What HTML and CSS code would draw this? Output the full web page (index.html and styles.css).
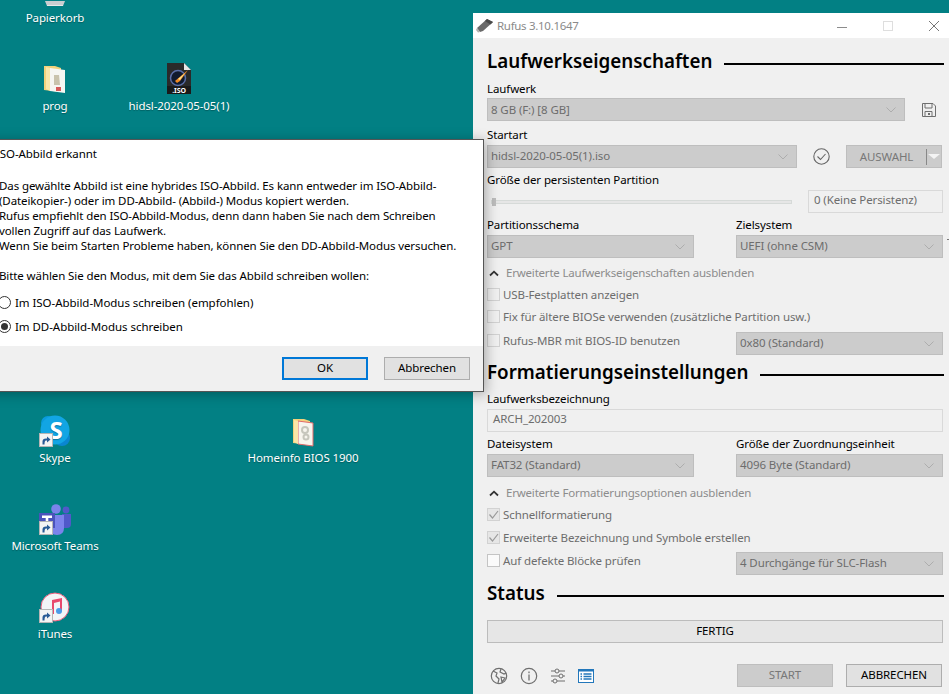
FILE: index.html
```html
<!DOCTYPE html>
<html lang="de">
<head>
  <meta charset="UTF-8">
  <title>Rufus 3.10.1647</title>
  <link rel="stylesheet" href="styles.css">
</head>
<body>
  <svg class="defs" width="0" height="0">
    <symbol id="shortcut" viewBox="0 0 14 14">
      <rect x="0.5" y="0.5" width="13" height="13" fill="#f4f4f4" stroke="#b5b5b5"/>
      <path d="M3.5 11.5V8.5Q3.5 5.5 7 5.5H8V3.5L11.5 6.5 8 9.5V7.5H7Q5.5 7.5 5.5 11.5Z" fill="#2a5b96"/>
    </symbol>
    <symbol id="chev" viewBox="0 0 10 6">
      <path d="M0.5 0.5L5 5 9.5 0.5" fill="none" stroke="#adadad"/>
    </symbol>
    <symbol id="tick" viewBox="0 0 13 13">
      <path d="M2.5 6.5L5.5 10 11 3" fill="none" stroke="#9a9a9a" stroke-width="1.2"/>
    </symbol>
    <symbol id="up" viewBox="0 0 10 7">
      <path d="M1 5.5L5 1.7 9 5.5" fill="none" stroke="#333" stroke-width="1.8"/>
    </symbol>
  </svg>

  <div class="desktop">
    <div class="icon icon-bin">
      <svg class="art" width="34" height="34" viewBox="0 0 34 34">
        <path d="M7 29H27L25 34H9Z" fill="#c9cdd0"/>
        <path d="M9 33H25V34H9Z" fill="#e8e8e8"/>
      </svg>
      <span>Papierkorb</span>
    </div>
    <div class="icon icon-prog">
      <svg class="art" width="34" height="34" viewBox="0 0 34 34">
        <path d="M6 6H17L23 8V32L6 30Z" fill="#f3d27c"/>
        <path d="M12 8L27 10V33L12 31Z" fill="#f6f6f2"/>
        <path d="M12 8L8 7V29L12 31Z" fill="#fbe6a8"/>
        <path d="M16 15H21L22 25H16Z" fill="#c9c3ad"/>
        <rect x="18" y="27" width="5" height="4" fill="#d65a5a"/>
      </svg>
      <span>prog</span>
    </div>
    <div class="icon icon-iso">
      <svg class="art" width="34" height="34" viewBox="0 0 34 34">
        <path d="M5 3H22L29 10V34H5Z" fill="#2a2a2a"/>
        <path d="M22 3L29 10H22Z" fill="#e6e6e6"/>
        <rect x="5" y="26" width="24" height="8" fill="#1a1a1a"/>
        <circle cx="16" cy="18" r="7.5" fill="#101a2e" stroke="#5a6ea8" stroke-width="1.5"/>
        <path d="M13 21L26 10 18 21 15 23Z" fill="#f08a24"/>
        <path d="M16 19L23 13 18 20Z" fill="#ffe08a"/>
        <text class="iso-mark" x="17" y="32.5" text-anchor="middle">.ISO</text>
      </svg>
      <span>hidsl-2020-05-05(1)</span>
    </div>
    <div class="icon icon-skype">
      <svg class="art" width="34" height="34" viewBox="0 0 34 34">
        <circle cx="10" cy="11" r="7" fill="#0a9bdc"/>
        <circle cx="24" cy="26" r="8" fill="#0a86d0"/>
        <circle cx="17" cy="18" r="14.5" fill="#12a5e4"/>
        <text class="skype-mark" x="18" y="27" text-anchor="middle">S</text>
        <use href="#shortcut" x="1" y="21" width="14" height="14"/>
      </svg>
      <span>Skype</span>
    </div>
    <div class="icon icon-home">
      <svg class="art" width="34" height="34" viewBox="0 0 34 34">
        <path d="M7 7H18L24 9V33L7 31Z" fill="#f3d27c"/>
        <path d="M12 9L27 11V34L12 32Z" fill="#f7f5ee" stroke="#e0696a"/>
        <path d="M12 9L8 8V30L12 32Z" fill="#fbe6a8"/>
        <circle cx="19" cy="18" r="3" fill="none" stroke="#c6c6bc" stroke-width="2"/>
        <circle cx="20" cy="25" r="2.5" fill="none" stroke="#c6c6bc" stroke-width="2"/>
      </svg>
      <span>Homeinfo BIOS 1900</span>
    </div>
    <div class="icon icon-teams">
      <svg class="art" width="34" height="34" viewBox="0 0 34 34">
        <circle cx="18" cy="9" r="4.8" fill="#7b83eb"/>
        <circle cx="28" cy="10" r="3.4" fill="#5059c9"/>
        <path d="M24 14H33V24Q33 28 29 28H24Z" fill="#5059c9"/>
        <path d="M12 15H26V28Q26 35 19 35 12 35 12 28Z" fill="#7b83eb"/>
        <rect x="1" y="13" width="16" height="15" fill="#4b53bc"/>
        <path d="M4 15.5H14V18H10.3V26H7.7V18H4Z" fill="#fff"/>
        <use href="#shortcut" x="1" y="21" width="14" height="14"/>
      </svg>
      <span>Microsoft Teams</span>
    </div>
    <div class="icon icon-itunes">
      <svg class="art" width="34" height="34" viewBox="0 0 34 34">
        <circle cx="17" cy="19" r="14" fill="#f3f4f7" stroke="#ee5b7b" stroke-width="1"/>
        <path d="M14 12L24 10V23H22V13.5L16 15V26H14Z" fill="#e8486d"/>
        <circle cx="21" cy="23" r="3" fill="#4b9be8"/>
        <use href="#shortcut" x="1" y="21" width="14" height="14"/>
      </svg>
      <span>iTunes</span>
    </div>

    <div class="rufus">
      <div class="titlebar">
        <svg class="usb" width="18" height="15" viewBox="0 0 18 15">
          <path d="M1 10L11 1 17 4 7 13 4 14Z" fill="#6a6a6a"/>
          <path d="M11 1L17 4 14.5 6.5 9 3Z" fill="#4a4a4a"/>
          <path d="M1 10L4 14 2 14.5 0 12Z" fill="#b0b0b0"/>
        </svg>
        <span class="title">Rufus 3.10.1647</span>
        <div class="winbtns">
          <svg width="10" height="10" viewBox="0 0 10 10"><path d="M0 6.5H10" stroke="#8c8c8c"/></svg>
          <svg width="10" height="10" viewBox="0 0 10 10"><rect x="0.5" y="0.5" width="9" height="9" fill="none" stroke="#dedede"/></svg>
          <svg width="10" height="10" viewBox="0 0 10 10"><path d="M0 0L10 10M10 0L0 10" stroke="#777"/></svg>
        </div>
      </div>

      <div class="panel">
        <h2 class="section first">Laufwerkseigenschaften</h2>
        <div class="label">Laufwerk</div>
        <div class="line">
          <div class="select grow">8 GB (F:) [8 GB]<svg class="chev"><use href="#chev"/></svg></div>
          <svg class="save" width="14" height="14" viewBox="0 0 14 14">
            <path d="M0.5 0.5H11L13.5 3V13.5H0.5Z" fill="none" stroke="#6f6f6f"/>
            <path d="M3 0.5V5H10V0.5M3 13.5V8.5H10V13.5" fill="none" stroke="#6f6f6f"/>
            <rect x="6" y="10" width="2" height="2" fill="#6f6f6f"/>
          </svg>
        </div>
        <div class="label gap5">Startart</div>
        <div class="line">
          <div class="select boot">hidsl-2020-05-05(1).iso<svg class="chev"><use href="#chev"/></svg></div>
          <svg class="verify" width="17" height="17" viewBox="0 0 17 17">
            <circle cx="8.5" cy="8.5" r="7.7" fill="none" stroke="#666" stroke-width="1.1"/>
            <path d="M4.5 8.5L7.5 11.5 12.5 6" fill="none" stroke="#666" stroke-width="1.1"/>
          </svg>
          <div class="split">
            <span class="split-text">AUSWAHL</span>
            <span class="split-arrow"></span>
          </div>
        </div>
        <div class="label gap4">Größe der persistenten Partition</div>
        <div class="line">
          <div class="slider"><span class="thumb"></span></div>
          <div class="field persist">0 (Keine Persistenz)</div>
        </div>
        <div class="cols gap4">
          <div>
            <div class="label">Partitionsschema</div>
            <div class="select">GPT<svg class="chev"><use href="#chev"/></svg></div>
          </div>
          <div>
            <div class="label">Zielsystem</div>
            <div class="select">UEFI (ohne CSM)<svg class="chev"><use href="#chev"/></svg></div>
          </div>
        </div>
        <div class="expander gap5"><svg width="10" height="7"><use href="#up"/></svg>Erweiterte Laufwerkseigenschaften ausblenden</div>
        <div class="check"><span class="box"></span>USB-Festplatten anzeigen</div>
        <div class="check"><span class="box"></span>Fix für ältere BIOSe verwenden (zusätzliche Partition usw.)</div>
        <div class="cols gap3">
          <div class="check tight"><span class="box"></span>Rufus-MBR mit BIOS-ID benutzen</div>
          <div class="select">0x80 (Standard)<svg class="chev"><use href="#chev"/></svg></div>
        </div>

        <h2 class="section gap6">Formatierungseinstellungen</h2>
        <div class="label gap6 high">Laufwerksbezeichnung</div>
        <div class="field">ARCH_202003</div>
        <div class="cols gap4">
          <div>
            <div class="label">Dateisystem</div>
            <div class="select">FAT32 (Standard)<svg class="chev"><use href="#chev"/></svg></div>
          </div>
          <div>
            <div class="label">Größe der Zuordnungseinheit</div>
            <div class="select">4096 Byte (Standard)<svg class="chev"><use href="#chev"/></svg></div>
          </div>
        </div>
        <div class="expander gap6"><svg width="10" height="7"><use href="#up"/></svg>Erweiterte Formatierungsoptionen ausblenden</div>
        <div class="check"><span class="box ticked"><svg width="13" height="13"><use href="#tick"/></svg></span>Schnellformatierung</div>
        <div class="check gap1"><span class="box ticked"><svg width="13" height="13"><use href="#tick"/></svg></span>Erweiterte Bezeichnung und Symbole erstellen</div>
        <div class="cols gap2">
          <div class="check tight"><span class="box open"></span>Auf defekte Blöcke prüfen</div>
          <div class="select">4 Durchgänge für SLC-Flash<svg class="chev"><use href="#chev"/></svg></div>
        </div>

        <h2 class="section gap7">Status</h2>
        <div class="progress">FERTIG</div>

        <div class="toolbar">
          <svg width="18" height="18" viewBox="0 0 18 18">
            <circle cx="9" cy="9" r="7.7" fill="none" stroke="#6f6f6f" stroke-width="1.2"/>
            <path d="M3 4L7 6 6 9 9 12 8 16M11 2L10 5 14 7 16 6M11 10L15 11 12 15Z" fill="none" stroke="#6f6f6f" stroke-width="1.2"/>
          </svg>
          <svg width="18" height="18" viewBox="0 0 18 18">
            <circle cx="9" cy="9" r="7.7" fill="none" stroke="#6f6f6f" stroke-width="1.2"/>
            <rect x="8.2" y="7.5" width="1.6" height="6" fill="#8a8a8a"/>
            <rect x="8.2" y="4.5" width="1.6" height="1.7" fill="#8a8a8a"/>
          </svg>
          <svg width="16" height="16" viewBox="0 0 16 16">
            <path d="M1 3H15M1 8H15M1 13H15" stroke="#6f6f6f"/>
            <circle cx="7" cy="3" r="2" fill="#f0f0f0" stroke="#6f6f6f"/>
            <circle cx="11" cy="8" r="2" fill="#f0f0f0" stroke="#6f6f6f"/>
            <circle cx="5" cy="13" r="2" fill="#f0f0f0" stroke="#6f6f6f"/>
          </svg>
          <svg width="16" height="14" viewBox="0 0 16 14">
            <rect x="0.5" y="0.5" width="15" height="13" fill="#fff" stroke="#2277bb"/>
            <rect x="0" y="0" width="16" height="2.5" fill="#2277bb"/>
            <path d="M2.5 5H4M2.5 7.5H4M2.5 10H4M5.5 5H13.5M5.5 7.5H13.5M5.5 10H13.5" stroke="#2277bb" stroke-width="1.4"/>
          </svg>
          <div class="actions">
            <div class="btn off">START</div>
            <div class="btn">ABBRECHEN</div>
          </div>
        </div>
      </div>
    </div>

    <div class="dialog">
      <div class="dialog-body">
        <div class="dialog-title">ISO-Abbild erkannt</div>
        <p>Das gewählte Abbild ist eine hybrides ISO-Abbild. Es kann entweder im ISO-Abbild-<br>
        (Dateikopier-) oder im DD-Abbild- (Abbild-) Modus kopiert werden.<br>
        Rufus empfiehlt den ISO-Abbild-Modus, denn dann haben Sie nach dem Schreiben<br>
        vollen Zugriff auf das Laufwerk.<br>
        Wenn Sie beim Starten Probleme haben, können Sie den DD-Abbild-Modus versuchen.</p>
        <p>Bitte wählen Sie den Modus, mit dem Sie das Abbild schreiben wollen:</p>
        <div class="radio"><span class="dot"></span>Im ISO-Abbild-Modus schreiben (empfohlen)</div>
        <div class="radio"><span class="dot on"></span>Im DD-Abbild-Modus schreiben</div>
      </div>
      <div class="dialog-foot">
        <div class="dbtn primary">OK</div>
        <div class="dbtn">Abbrechen</div>
      </div>
    </div>
  </div>
</body>
</html>
```

FILE: styles.css
```css
* {
  box-sizing: border-box;
}
html, body {
  margin: 0;
  padding: 0;
}
body {
  font-family: "Noto Sans", "Open Sans", sans-serif;
  font-size: 11.5px;
  letter-spacing: -0.1px;
}
.defs {
  position: absolute;
}
.desktop {
  position: relative;
  width: 949px;
  height: 694px;
  overflow: hidden;
  background: #028084;
}

/* desktop icons */
.icon {
  position: absolute;
  width: 140px;
  display: flex;
  flex-direction: column;
  align-items: center;
  color: #fff;
  line-height: 18px;
  text-shadow: 0 1px 1px rgba(0,0,0,0.3);
}
.art {
  overflow: visible;
  margin-bottom: 3px;
}
.icon-bin { left: -15px; top: -28px; }
.icon-prog { left: -15px; top: 60px; }
.icon-iso { left: 109px; top: 60px; }
.icon-skype { left: -15px; top: 412px; }
.icon-home { left: 233px; top: 412px; }
.icon-teams { left: -15px; top: 500px; }
.icon-itunes { left: -15px; top: 588px; }
.iso-mark {
  font-size: 7px;
  font-weight: bold;
  fill: #fff;
}
.skype-mark {
  font-size: 24px;
  font-weight: bold;
  fill: #fff;
}

/* rufus window */
.rufus {
  position: absolute;
  left: 473px;
  top: 13px;
  width: 476px;
  height: 681px;
  background: #f0f0f0;
}
/* stray tick at the clipped right edge */
.rufus::after {
  content: "";
  position: absolute;
  right: 0;
  top: 226px;
  width: 2px;
  height: 1px;
  background: #777;
}
.titlebar {
  height: 25px;
  background: #fff;
  display: flex;
  align-items: center;
  padding-left: 3px;
  color: #8a8a8a;
}
.usb {
  margin-right: 3px;
}
.title {
  letter-spacing: -0.3px;
}
.winbtns {
  margin-left: auto;
  margin-right: 10px;
  display: flex;
  gap: 36px;
}
.panel {
  padding: 0 6px 0 14px;
  color: #000;
}
.section {
  display: flex;
  align-items: center;
  margin: 0 -1px 0 0;
  height: 24px;
  padding-bottom: 2px;
  font-size: 18.8px;
  font-weight: 600;
  letter-spacing: 0;
  white-space: nowrap;
}
.section::after {
  content: "";
  flex: 1;
  height: 2px;
  margin: 5px 0 0 12px;
  background: #000;
}
.section.first { margin-top: 12px; }
.section.gap6 { margin-top: 6px; }
.section.gap7 { margin-top: 7px; }
.label {
  height: 18px;
  line-height: 17px;
  margin-top: 6px;
}
.label.gap5 { margin-top: 5px; }
.label.gap4 { margin-top: 4px; line-height: 15px; }
.label.high { line-height: 15px; }
.cols .label { margin-top: 0; line-height: 15px; }
.line {
  display: flex;
  align-items: center;
}
.select {
  position: relative;
  height: 23px;
  line-height: 20px;
  padding-left: 3px;
  background: #ccc;
  border: 1px solid #bebebe;
  color: #6d6d6d;
}
.chev {
  position: absolute;
  right: 8px;
  top: 8px;
  width: 10px;
  height: 6px;
}
.grow { width: 418px; line-height: 21px; }
.save { margin-left: 17px; }
.boot { width: 310px; line-height: 19px; }
.verify { margin-left: 16px; }
.split {
  display: flex;
  align-items: center;
  width: 96px;
  height: 23px;
  margin: 1px 1px 0 auto;
  background: #ccc;
  border: 1px solid #bebebe;
  color: #787878;
}
.split-text {
  flex: 1;
  text-align: center;
  border-right: 1px solid #888;
  line-height: 16px;
}
.split-arrow {
  width: 12px;
  height: 0;
  border-top: 5px solid #f4f4f4;
  border-left: 6px solid transparent;
  border-right: 6px solid transparent;
  margin: 0 1px;
}
.slider {
  position: relative;
  width: 301px;
  height: 4px;
  margin-left: 4px;
  background: #e6e6e6;
  border: 1px solid #d6dad8;
}
.thumb {
  position: absolute;
  left: 0;
  top: -3px;
  width: 4px;
  height: 8px;
  background: #bdbdbd;
}
.field {
  height: 23px;
  line-height: 18px;
  padding-left: 5px;
  background: #f0f0f0;
  border: 1px solid #d9d9d9;
  color: #6d6d6d;
}
.persist {
  width: 135px;
  margin-left: 16px;
}
.cols {
  display: grid;
  grid-template-columns: 207px 207px;
  column-gap: 42px;
}
.check.gap1 { margin-top: 1px; }
.cols.gap2 { margin-top: 2px; }
.cols.gap3 { margin-top: 3px; }
.cols.gap4 { margin-top: 4px; }
.expander.gap5 { margin-top: 5px; }
.expander.gap6 { margin-top: 6px; }
.expander {
  display: flex;
  align-items: center;
  gap: 7px;
  height: 22px;
  padding: 0 0 2px 2px;
  line-height: 20px;
  color: #8c8c8c;
  letter-spacing: -0.2px;
}
.check {
  display: flex;
  align-items: center;
  height: 22px;
  padding-bottom: 3px;
  color: #6d6d6d;
  white-space: nowrap;
}
.check.tight {
  height: 20px;
}
.box {
  flex: none;
  width: 13px;
  height: 13px;
  margin-right: 3px;
  border: 1px solid #d2d2d2;
  background: #f0f0f0;
}
.box svg {
  display: block;
  margin: -1px;
}
.ticked { background: #e6e6e6; }
.open { background: #fafafa; border-color: #c4c4c4; }
.progress {
  height: 23px;
  margin-top: 14px;
  line-height: 19px;
  text-align: center;
  background: #e6e6e6;
  border: 1px solid #bcbcbc;
}
.toolbar {
  display: flex;
  align-items: center;
  gap: 12px;
  margin-top: 21px;
  padding-left: 3px;
}
.actions {
  display: flex;
  gap: 13px;
  margin-left: auto;
  margin-right: 1px;
}
.btn {
  width: 96px;
  height: 23px;
  line-height: 20px;
  text-align: center;
  background: #e1e1e1;
  border: 1px solid #adadad;
}
.btn.off {
  background: #ccc;
  border-color: #bebebe;
  color: #787878;
}

/* message box */
.dialog {
  position: absolute;
  left: -20px;
  top: 139px;
  width: 504px;
  height: 253px;
  display: flex;
  flex-direction: column;
  background: #fff;
  border: 1px solid #555;
  border-left: 0;
  box-shadow: 2px 2px 12px rgba(0,0,0,0.3);
}
.dialog-body {
  flex: 1;
  padding: 6px 0 0 19px;
  line-height: 15px;
  white-space: nowrap;
}
.dialog-title {
  margin-left: -3px;
}
.dialog p {
  margin: 17px 0 0;
}
.dialog p + p {
  margin-top: 15px;
}
.radio {
  display: flex;
  align-items: center;
  gap: 4px;
  height: 24px;
  margin-left: -1px;
  letter-spacing: -0.05px;
}
.dialog p + .radio {
  margin-top: 7px;
}
.dot {
  flex: none;
  position: relative;
  width: 13px;
  height: 13px;
  border: 1px solid #333;
  border-radius: 50%;
  background: #fff;
}
.dot.on::after {
  content: "";
  position: absolute;
  left: 2px;
  top: 2px;
  width: 7px;
  height: 7px;
  border-radius: 50%;
  background: #333;
}
.dialog-foot {
  display: flex;
  justify-content: flex-end;
  gap: 16px;
  height: 45px;
  padding: 11px 13px 0 0;
  background: #f0f0f0;
}
.dbtn {
  width: 86px;
  height: 23px;
  line-height: 20px;
  text-align: center;
  background: #e1e1e1;
  border: 1px solid #adadad;
}
.dbtn.primary {
  border: 2px solid #0078d7;
  line-height: 18px;
}
```
